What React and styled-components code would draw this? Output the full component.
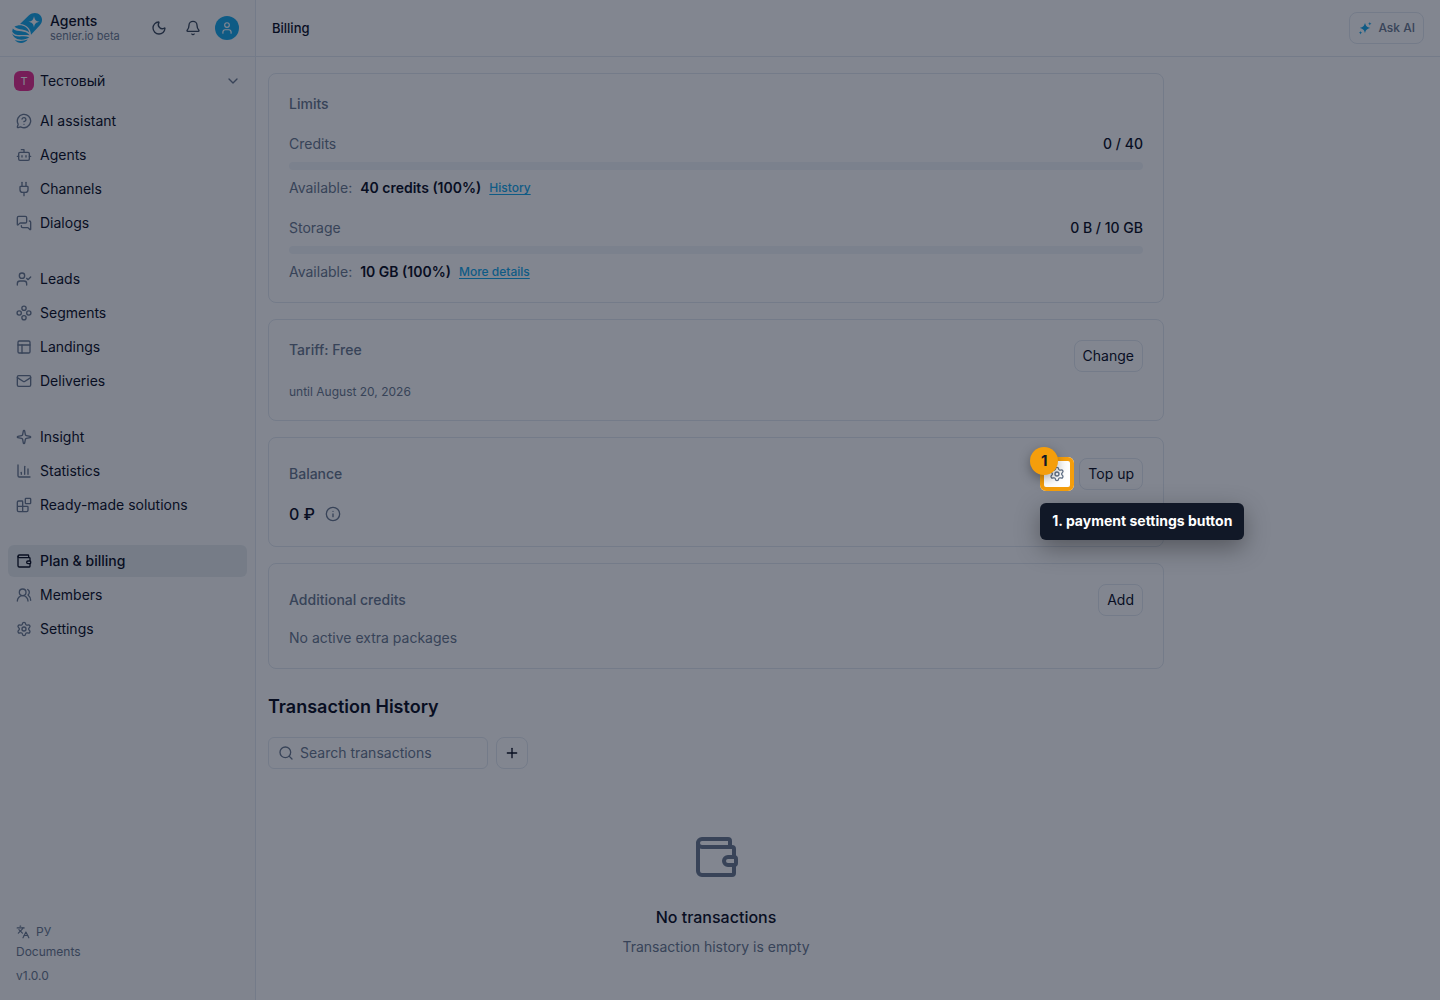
import React from "react";
import styled, { createGlobalStyle } from "styled-components";
import {
  Bell,
  Blocks,
  Bot,
  ChartColumn,
  ChevronDown,
  Info,
  Languages,
  Mail,
  MessageCircleQuestionMark,
  MessagesSquare,
  Moon,
  PanelsTopLeft,
  Plug,
  Plus,
  Search,
  Settings,
  Sparkle,
  User,
  UserCheck,
  UsersRound,
  Wallet,
} from "lucide-react";

const GlobalStyle = createGlobalStyle`
  *, *::before, *::after {
    box-sizing: border-box;
  }

  body {
    margin: 0;
    background: #fff;
    color: #020617;
    font-family: Inter, "Noto Sans", sans-serif;
    font-size: 14px;
    line-height: 20px;
  }

  h1, h2, h3, p {
    margin: 0;
  }

  button, input {
    font: inherit;
    color: inherit;
  }
`;

const Page = styled.div`
  display: flex;
  min-height: 100vh;
`;

const Sidebar = styled.aside`
  display: flex;
  flex-direction: column;
  flex: none;
  width: 256px;
  background: #fafafa;
  border-right: 1px solid #e2e8f0;
`;

const Brand = styled.header`
  display: flex;
  align-items: center;
  gap: 8px;
  height: 57px;
  padding: 0 16px 0 12px;
  border-bottom: 1px solid #e2e8f0;
`;

const BrandText = styled.div`
  flex: 1;
`;

const BrandName = styled.p`
  font-weight: 500;
  line-height: 16px;
`;

const BrandHost = styled.p`
  color: #64748b;
  font-size: 11px;
  line-height: 14px;
`;

const BrandActions = styled.div`
  display: flex;
  align-items: center;
  gap: 10px;
`;

const RoundButton = styled.button`
  display: grid;
  place-items: center;
  width: 24px;
  height: 24px;
  padding: 0;
  border: 0;
  border-radius: 50%;
  background: ${(p) => (p.$filled ? "#0ea5e9" : "none")};
  color: ${(p) => (p.$filled ? "#fff" : "#334155")};
`;

const ProjectButton = styled.button`
  display: flex;
  align-items: center;
  gap: 6px;
  height: 32px;
  margin: 8px;
  padding: 0 6px;
  border: 0;
  background: none;
  text-align: left;

  svg {
    margin-left: auto;
    color: #64748b;
  }
`;

const ProjectBadge = styled.span`
  display: grid;
  place-items: center;
  width: 20px;
  height: 20px;
  border-radius: 6px;
  background: #e7268a;
  color: #fff;
  font-size: 11px;
`;

const Nav = styled.nav`
  display: flex;
  flex-direction: column;
  gap: 24px;
  padding: 0 8px;
`;

const NavGroup = styled.div`
  display: flex;
  flex-direction: column;
  gap: 2px;
`;

const NavLink = styled.a`
  display: flex;
  align-items: center;
  gap: 8px;
  height: 32px;
  padding: 0 8px;
  border-radius: 6px;
  background: ${(p) => (p.$active ? "#e6ebed" : "none")};
  color: #020617;
  font-weight: ${(p) => (p.$active ? 500 : 400)};
  text-decoration: none;

  svg {
    color: ${(p) => (p.$active ? "#020617" : "#64748b")};
  }
`;

const SidebarFooter = styled.footer`
  display: flex;
  flex-direction: column;
  align-items: flex-start;
  margin-top: auto;
  padding: 0 16px 16px;
  color: #64748b;
  font-size: 12px;
  line-height: 16px;

  a {
    margin: 4px 0 8px;
    color: inherit;
    text-decoration: none;
  }
`;

const LanguageButton = styled.button`
  display: flex;
  align-items: center;
  gap: 6px;
  padding: 0;
  border: 0;
  background: none;
`;

const Main = styled.main`
  flex: 1;
  min-width: 0;
`;

const TopBar = styled.header`
  display: flex;
  align-items: center;
  justify-content: space-between;
  height: 57px;
  padding: 0 16px;
  border-bottom: 1px solid #e2e8f0;
`;

const PageTitle = styled.h1`
  font-size: 13px;
  font-weight: 500;
`;

const Content = styled.div`
  display: flex;
  flex-direction: column;
  gap: 16px;
  max-width: 920px;
  padding: 16px 12px;
`;

const Card = styled.section`
  padding: 20px;
  border: 1px solid #e2e8f0;
  border-radius: 8px;
`;

const CardHeader = styled.div`
  display: flex;
  align-items: ${(p) => (p.$top ? "flex-start" : "center")};
  justify-content: space-between;
  margin-bottom: 12px;
`;

const CardTitle = styled.h2`
  color: #64748b;
  font-size: 14px;
  font-weight: 500;
`;

const Actions = styled.div`
  display: flex;
  gap: 6px;
`;

const Button = styled.button`
  display: flex;
  align-items: center;
  justify-content: center;
  gap: 6px;
  height: 32px;
  min-width: 32px;
  padding: 0 8px;
  border: 1px solid #e2e8f0;
  border-radius: 8px;
  background: #fff;
`;

const AskButton = styled(Button)`
  color: #64748b;
  font-size: 12px;
  font-weight: 500;
`;

const IconButton = styled(Button)`
  padding: 0;
  border-color: ${(p) => (p.$plain ? "transparent" : "#e2e8f0")};
  color: ${(p) => (p.$plain ? "#64748b" : "#020617")};
`;

const Limit = styled.div`
  margin-top: 20px;
`;

const LimitRow = styled.div`
  display: flex;
  justify-content: space-between;
  color: #64748b;

  strong {
    color: #020617;
    font-weight: 500;
  }
`;

const Track = styled.div`
  height: 8px;
  margin: 8px 0;
  border-radius: 4px;
  background: #f1f5f9;
  overflow: hidden;
`;

const TrackFill = styled.div`
  height: 100%;
  background: #0ea5e9;
`;

const Available = styled.p`
  display: flex;
  gap: 8px;
  color: #64748b;

  strong {
    color: #020617;
    font-weight: 600;
  }

  a {
    color: #0ea5e9;
    font-size: 12px;
    font-weight: 500;
    text-underline-offset: 2px;
  }
`;

const Note = styled.p`
  color: #64748b;
  font-size: ${(p) => (p.$small ? "12px" : "14px")};
  line-height: ${(p) => (p.$small ? "16px" : "20px")};
`;

const Balance = styled.p`
  display: flex;
  align-items: center;
  gap: 10px;
  font-size: 16px;
  font-weight: 500;
  line-height: 24px;

  svg {
    color: #64748b;
  }
`;

const SectionTitle = styled.h2`
  margin-top: 8px;
  font-size: 18px;
  font-weight: 600;
  line-height: 28px;
`;

const Filters = styled.div`
  display: flex;
  gap: 8px;
`;

const SearchBox = styled.label`
  display: flex;
  align-items: center;
  gap: 6px;
  width: 220px;
  height: 32px;
  padding: 0 9px;
  border: 1px solid #e2e8f0;
  border-radius: 6px;
  color: #64748b;

  svg {
    flex: none;
  }

  input {
    flex: 1;
    min-width: 0;
    padding: 0;
    border: 0;
    outline: 0;
    background: none;
  }

  input::placeholder {
    color: #64748b;
    opacity: 1;
  }
`;

const Empty = styled.div`
  display: flex;
  flex-direction: column;
  align-items: center;
  padding-top: 48px;

  > svg {
    color: #64748b;
  }

  h3 {
    margin: 24px 0 8px;
    font-size: 16px;
    font-weight: 500;
    line-height: 24px;
  }
`;

const TourTarget = styled.div`
  position: relative;
`;

// dims everything around the highlighted control
const TourRing = styled.div`
  position: absolute;
  inset: -1px;
  z-index: 10;
  border: 4px solid #f59e0b;
  border-radius: 6px;
  box-shadow: 0 0 0 9999px rgba(15, 23, 42, 0.52);
  pointer-events: none;
`;

const TourNumber = styled.span`
  position: absolute;
  top: -11px;
  left: -11px;
  z-index: 12;
  display: grid;
  place-items: center;
  width: 28px;
  height: 28px;
  border-radius: 50%;
  background: #f59e0b;
  box-shadow: 0 4px 12px rgba(0, 0, 0, 0.35);
  color: #111827;
  font-size: 15px;
  font-weight: 700;
`;

const TourTip = styled.div`
  position: absolute;
  top: 45px;
  left: -1px;
  z-index: 11;
  padding: 8px 12px 9px;
  border-radius: 6px;
  background: #111827;
  box-shadow: 0 8px 24px rgba(0, 0, 0, 0.35);
  color: #fff;
  font-weight: 700;
  white-space: nowrap;
`;

const groups = [
  [
    { label: "AI assistant", icon: MessageCircleQuestionMark },
    { label: "Agents", icon: Bot },
    { label: "Channels", icon: Plug },
    { label: "Dialogs", icon: MessagesSquare },
  ],
  [
    { label: "Leads", icon: UserCheck },
    { label: "Segments", icon: SegmentsIcon },
    { label: "Landings", icon: PanelsTopLeft },
    { label: "Deliveries", icon: Mail },
  ],
  [
    { label: "Insight", icon: Sparkle },
    { label: "Statistics", icon: ChartColumn },
    { label: "Ready-made solutions", icon: Blocks },
  ],
  [
    { label: "Plan & billing", icon: Wallet, active: true },
    { label: "Members", icon: UsersRound },
    { label: "Settings", icon: Settings },
  ],
];

const limits = [
  {
    name: "Credits",
    total: "0 / 40",
    left: "40 credits (100%)",
    link: "History",
    used: 0,
  },
  {
    name: "Storage",
    total: "0 B / 10 GB",
    left: "10 GB (100%)",
    link: "More details",
    used: 0,
  },
];

function SegmentsIcon({ size }) {
  return (
    <svg
      width={size}
      height={size}
      viewBox="0 0 24 24"
      fill="none"
      stroke="currentColor"
      strokeWidth="2"
    >
      <circle cx="12" cy="4.8" r="3.2" />
      <circle cx="4.8" cy="12" r="3.2" />
      <circle cx="19.2" cy="12" r="3.2" />
      <circle cx="12" cy="19.2" r="3.2" />
    </svg>
  );
}

function SparklesIcon() {
  return (
    <svg width="14" height="14" viewBox="0 0 14 14" fill="#0ea5e9">
      <path d="M7 1.8C7.9 5.2 8.8 6.1 12.2 7C8.8 7.9 7.9 8.800 7 12.2C6.1 8.800 5.200 7.900 1.800 7C5.200 6.100 6.100 5.200 7 1.800Z" />
      <path d="M11.800 1L12.300 2.200L13.500 2.700L12.300 3.200L11.800 4.400L11.300 3.200L10.100 2.700L11.300 2.200Z" />
      <path d="M2.500 10L3 11.200L4.200 11.700L3 12.200L2.500 13.400L2 12.200L0.800 11.700L2 11.200Z" />
    </svg>
  );
}

function Logo() {
  return (
    <svg width="30" height="30" viewBox="0 0 30 30" fill="#0ea5e9">
      <path d="M8 11L17 2.300C20.500 -0.800 25.500 -0.600 28.200 2.200C30.800 5 30.600 9.500 27.600 12.600L19 21.800C18.800 15.500 14.500 11.300 8 11Z" />
      <path
        d="M22 3.200C22.800 7 23.800 8 27.600 8.800C23.800 9.600 22.800 10.600 22 14.400C21.200 10.600 20.200 9.600 16.400 8.800C20.200 8 21.200 7 22 3.200Z"
        fill="#fafafa"
      />
      <path d="M2.500 13.800C7.500 10.600 15.500 12.500 17.300 19.500C13 15.600 7.500 17.600 2.500 13.800Z" />
      <path d="M0.800 15.500C5.500 20.300 13.500 16 17.700 22.300C12 20.800 3.500 24.500 0.200 18.500Z" />
      <path d="M0 20.500C4 25.800 11 21.800 17.300 24.200C13 27.200 3.500 29 0 20.500Z" />
      <path d="M2.800 27C7 28.600 11.500 28.200 15.800 26.600C12.500 31 6 31 2.800 27Z" />
    </svg>
  );
}

function LimitBlock({ name, total, left, link, used }) {
  return (
    <Limit>
      <LimitRow>
        <span>{name}</span>
        <strong>{total}</strong>
      </LimitRow>
      <Track>
        <TrackFill style={{ width: `${used}%` }} />
      </Track>
      <Available>
        Available: <strong>{left}</strong>
        <a href="#details">{link}</a>
      </Available>
    </Limit>
  );
}

export default function App() {
  return (
    <>
      <GlobalStyle />
      <Page>
        <Sidebar>
          <Brand>
            <Logo />
            <BrandText>
              <BrandName>Agents</BrandName>
              <BrandHost>senler.io beta</BrandHost>
            </BrandText>
            <BrandActions>
              <RoundButton aria-label="Theme">
                <Moon size={16} />
              </RoundButton>
              <RoundButton aria-label="Notifications">
                <Bell size={16} />
              </RoundButton>
              <RoundButton $filled aria-label="Profile">
                <User size={14} />
              </RoundButton>
            </BrandActions>
          </Brand>
          <ProjectButton>
            <ProjectBadge>T</ProjectBadge>
            Тестовый
            <ChevronDown size={16} />
          </ProjectButton>
          <Nav>
            {groups.map((items) => (
              <NavGroup key={items[0].label}>
                {items.map(({ label, icon: Icon, active }) => (
                  <NavLink key={label} href="#nav" $active={active}>
                    <Icon size={16} />
                    {label}
                  </NavLink>
                ))}
              </NavGroup>
            ))}
          </Nav>
          <SidebarFooter>
            <LanguageButton>
              <Languages size={14} />
              РУ
            </LanguageButton>
            <a href="#documents">Documents</a>
            <span>v1.0.0</span>
          </SidebarFooter>
        </Sidebar>
        <Main>
          <TopBar>
            <PageTitle>Billing</PageTitle>
            <AskButton>
              <SparklesIcon />
              Ask AI
            </AskButton>
          </TopBar>
          <Content>
            <Card>
              <CardTitle>Limits</CardTitle>
              {limits.map((limit) => (
                <LimitBlock key={limit.name} {...limit} />
              ))}
            </Card>
            <Card>
              <CardHeader $top>
                <CardTitle>Tariff: Free</CardTitle>
                <Button>Change</Button>
              </CardHeader>
              <Note $small>until August 20, 2026</Note>
            </Card>
            <Card>
              <CardHeader>
                <CardTitle>Balance</CardTitle>
                <Actions>
                  <TourTarget>
                    <IconButton $plain aria-label="Payment settings">
                      <Settings size={16} />
                    </IconButton>
                    <TourRing />
                    <TourNumber>1</TourNumber>
                    <TourTip role="tooltip">1. payment settings button</TourTip>
                  </TourTarget>
                  <Button>Top up</Button>
                </Actions>
              </CardHeader>
              <Balance>
                0 ₽ <Info size={16} />
              </Balance>
            </Card>
            <Card>
              <CardHeader>
                <CardTitle>Additional credits</CardTitle>
                <Button>Add</Button>
              </CardHeader>
              <Note>No active extra packages</Note>
            </Card>
            <SectionTitle>Transaction History</SectionTitle>
            <Filters>
              <SearchBox>
                <Search size={16} />
                <input
                  type="text"
                  aria-label="Search transactions"
                  placeholder="Search transactions"
                />
              </SearchBox>
              <IconButton aria-label="Add filter">
                <Plus size={16} />
              </IconButton>
            </Filters>
            <Empty>
              <Wallet size={48} />
              <h3>No transactions</h3>
              <Note>Transaction history is empty</Note>
            </Empty>
          </Content>
        </Main>
      </Page>
    </>
  );
}
